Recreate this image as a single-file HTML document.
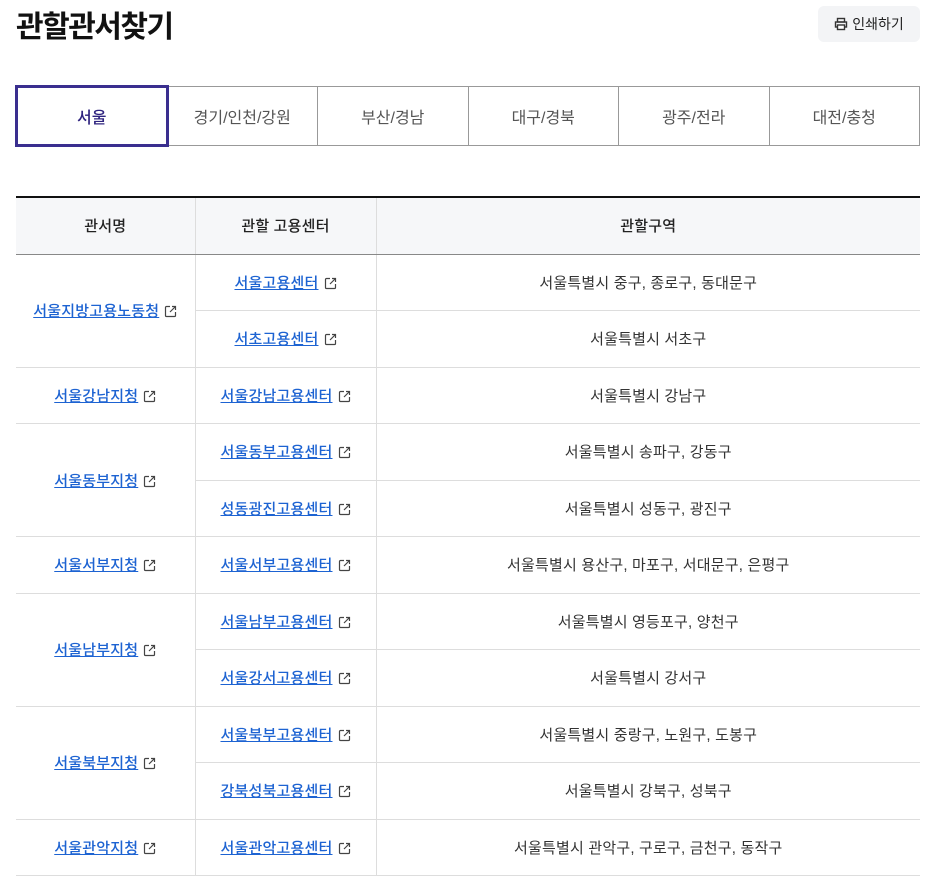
<!DOCTYPE html>
<html><head><meta charset="utf-8"><style>
*{box-sizing:border-box;margin:0;padding:0}
body{width:936px;height:886px;background:#fff;font-family:"Liberation Sans","Noto Sans CJK KR",sans-serif;color:#222;position:relative;overflow:hidden}
h1{position:absolute;left:16px;top:2px;font-size:30px;font-weight:700;letter-spacing:-1.5px;color:#111}
.print{position:absolute;left:818px;top:6px;width:102px;height:36px;background:#f3f4f6;border-radius:6px;font-size:14px;color:#222;display:flex;align-items:center;justify-content:center;gap:4px}
.tabs{position:absolute;left:16px;top:86px;width:904px;height:60px;display:flex;border:1px solid #999}
.tabs div{flex:1;display:flex;align-items:center;justify-content:center;font-size:16px;color:#555;border-left:1px solid #999}
.tabs div:first-child{border-left:none}
.tabs .on{box-shadow:0 0 0 2px #3a2f8f, inset 0 0 0 1px #3a2f8f;color:#2e237f;font-weight:500;position:relative;z-index:1}
table{position:absolute;left:16px;top:196px;width:904px;border-collapse:collapse;border-top:2px solid #111;font-size:15px;letter-spacing:0.2px}
th{background:#f6f7f9;height:57px;font-weight:500;border-bottom:1px solid #888;border-left:1px solid #ddd;color:#222}
td{height:56.5px;text-align:center;border-bottom:1px solid #ddd;border-left:1px solid #ddd;color:#333}
th:first-child,td.f{border-left:none}
a{color:#1d63d2;text-decoration:underline;font-weight:500}
.ic{display:inline-block;vertical-align:-2px;margin-left:5px}
</style></head><body>
<h1>관할관서찾기</h1>
<div class="print"><svg width="14" height="14" viewBox="0 0 14 14" fill="none" stroke="#333" stroke-width="1.4"><rect x="3.5" y="1.5" width="7" height="3.5"/><rect x="1.5" y="5" width="11" height="5"/><rect x="3.5" y="8" width="7" height="4.5" fill="#fff"/></svg>인쇄하기</div>
<div class="tabs"><div class="on">서울</div><div>경기/인천/강원</div><div>부산/경남</div><div>대구/경북</div><div>광주/전라</div><div>대전/충청</div></div>
<table>
<colgroup><col style="width:179px"><col style="width:181px"><col></colgroup>
<tr><th>관서명</th><th>관할 고용센터</th><th>관할구역</th></tr>
<tr><td class="f" rowspan="2"><a>서울지방고용노동청</a><svg class="ic" width="13" height="13" viewBox="0 0 13 13" fill="none" stroke="#444" stroke-width="1.2"><path d="M6 1.5H2.5a1 1 0 0 0-1 1v8a1 1 0 0 0 1 1h8a1 1 0 0 0 1-1V7M8 1.5h3.5V5M11.5 1.5 6 7"/></svg></td><td><a>서울고용센터</a><svg class="ic" width="13" height="13" viewBox="0 0 13 13" fill="none" stroke="#444" stroke-width="1.2"><path d="M6 1.5H2.5a1 1 0 0 0-1 1v8a1 1 0 0 0 1 1h8a1 1 0 0 0 1-1V7M8 1.5h3.5V5M11.5 1.5 6 7"/></svg></td><td>서울특별시 중구, 종로구, 동대문구</td></tr>
<tr><td><a>서초고용센터</a><svg class="ic" width="13" height="13" viewBox="0 0 13 13" fill="none" stroke="#444" stroke-width="1.2"><path d="M6 1.5H2.5a1 1 0 0 0-1 1v8a1 1 0 0 0 1 1h8a1 1 0 0 0 1-1V7M8 1.5h3.5V5M11.5 1.5 6 7"/></svg></td><td>서울특별시 서초구</td></tr>
<tr><td class="f"><a>서울강남지청</a><svg class="ic" width="13" height="13" viewBox="0 0 13 13" fill="none" stroke="#444" stroke-width="1.2"><path d="M6 1.5H2.5a1 1 0 0 0-1 1v8a1 1 0 0 0 1 1h8a1 1 0 0 0 1-1V7M8 1.5h3.5V5M11.5 1.5 6 7"/></svg></td><td><a>서울강남고용센터</a><svg class="ic" width="13" height="13" viewBox="0 0 13 13" fill="none" stroke="#444" stroke-width="1.2"><path d="M6 1.5H2.5a1 1 0 0 0-1 1v8a1 1 0 0 0 1 1h8a1 1 0 0 0 1-1V7M8 1.5h3.5V5M11.5 1.5 6 7"/></svg></td><td>서울특별시 강남구</td></tr>
<tr><td class="f" rowspan="2"><a>서울동부지청</a><svg class="ic" width="13" height="13" viewBox="0 0 13 13" fill="none" stroke="#444" stroke-width="1.2"><path d="M6 1.5H2.5a1 1 0 0 0-1 1v8a1 1 0 0 0 1 1h8a1 1 0 0 0 1-1V7M8 1.5h3.5V5M11.5 1.5 6 7"/></svg></td><td><a>서울동부고용센터</a><svg class="ic" width="13" height="13" viewBox="0 0 13 13" fill="none" stroke="#444" stroke-width="1.2"><path d="M6 1.5H2.5a1 1 0 0 0-1 1v8a1 1 0 0 0 1 1h8a1 1 0 0 0 1-1V7M8 1.5h3.5V5M11.5 1.5 6 7"/></svg></td><td>서울특별시 송파구, 강동구</td></tr>
<tr><td><a>성동광진고용센터</a><svg class="ic" width="13" height="13" viewBox="0 0 13 13" fill="none" stroke="#444" stroke-width="1.2"><path d="M6 1.5H2.5a1 1 0 0 0-1 1v8a1 1 0 0 0 1 1h8a1 1 0 0 0 1-1V7M8 1.5h3.5V5M11.5 1.5 6 7"/></svg></td><td>서울특별시 성동구, 광진구</td></tr>
<tr><td class="f"><a>서울서부지청</a><svg class="ic" width="13" height="13" viewBox="0 0 13 13" fill="none" stroke="#444" stroke-width="1.2"><path d="M6 1.5H2.5a1 1 0 0 0-1 1v8a1 1 0 0 0 1 1h8a1 1 0 0 0 1-1V7M8 1.5h3.5V5M11.5 1.5 6 7"/></svg></td><td><a>서울서부고용센터</a><svg class="ic" width="13" height="13" viewBox="0 0 13 13" fill="none" stroke="#444" stroke-width="1.2"><path d="M6 1.5H2.5a1 1 0 0 0-1 1v8a1 1 0 0 0 1 1h8a1 1 0 0 0 1-1V7M8 1.5h3.5V5M11.5 1.5 6 7"/></svg></td><td>서울특별시 용산구, 마포구, 서대문구, 은평구</td></tr>
<tr><td class="f" rowspan="2"><a>서울남부지청</a><svg class="ic" width="13" height="13" viewBox="0 0 13 13" fill="none" stroke="#444" stroke-width="1.2"><path d="M6 1.5H2.5a1 1 0 0 0-1 1v8a1 1 0 0 0 1 1h8a1 1 0 0 0 1-1V7M8 1.5h3.5V5M11.5 1.5 6 7"/></svg></td><td><a>서울남부고용센터</a><svg class="ic" width="13" height="13" viewBox="0 0 13 13" fill="none" stroke="#444" stroke-width="1.2"><path d="M6 1.5H2.5a1 1 0 0 0-1 1v8a1 1 0 0 0 1 1h8a1 1 0 0 0 1-1V7M8 1.5h3.5V5M11.5 1.5 6 7"/></svg></td><td>서울특별시 영등포구, 양천구</td></tr>
<tr><td><a>서울강서고용센터</a><svg class="ic" width="13" height="13" viewBox="0 0 13 13" fill="none" stroke="#444" stroke-width="1.2"><path d="M6 1.5H2.5a1 1 0 0 0-1 1v8a1 1 0 0 0 1 1h8a1 1 0 0 0 1-1V7M8 1.5h3.5V5M11.5 1.5 6 7"/></svg></td><td>서울특별시 강서구</td></tr>
<tr><td class="f" rowspan="2"><a>서울북부지청</a><svg class="ic" width="13" height="13" viewBox="0 0 13 13" fill="none" stroke="#444" stroke-width="1.2"><path d="M6 1.5H2.5a1 1 0 0 0-1 1v8a1 1 0 0 0 1 1h8a1 1 0 0 0 1-1V7M8 1.5h3.5V5M11.5 1.5 6 7"/></svg></td><td><a>서울북부고용센터</a><svg class="ic" width="13" height="13" viewBox="0 0 13 13" fill="none" stroke="#444" stroke-width="1.2"><path d="M6 1.5H2.5a1 1 0 0 0-1 1v8a1 1 0 0 0 1 1h8a1 1 0 0 0 1-1V7M8 1.5h3.5V5M11.5 1.5 6 7"/></svg></td><td>서울특별시 중랑구, 노원구, 도봉구</td></tr>
<tr><td><a>강북성북고용센터</a><svg class="ic" width="13" height="13" viewBox="0 0 13 13" fill="none" stroke="#444" stroke-width="1.2"><path d="M6 1.5H2.5a1 1 0 0 0-1 1v8a1 1 0 0 0 1 1h8a1 1 0 0 0 1-1V7M8 1.5h3.5V5M11.5 1.5 6 7"/></svg></td><td>서울특별시 강북구, 성북구</td></tr>
<tr><td class="f"><a>서울관악지청</a><svg class="ic" width="13" height="13" viewBox="0 0 13 13" fill="none" stroke="#444" stroke-width="1.2"><path d="M6 1.5H2.5a1 1 0 0 0-1 1v8a1 1 0 0 0 1 1h8a1 1 0 0 0 1-1V7M8 1.5h3.5V5M11.5 1.5 6 7"/></svg></td><td><a>서울관악고용센터</a><svg class="ic" width="13" height="13" viewBox="0 0 13 13" fill="none" stroke="#444" stroke-width="1.2"><path d="M6 1.5H2.5a1 1 0 0 0-1 1v8a1 1 0 0 0 1 1h8a1 1 0 0 0 1-1V7M8 1.5h3.5V5M11.5 1.5 6 7"/></svg></td><td>서울특별시 관악구, 구로구, 금천구, 동작구</td></tr>
</table>
</body></html>
